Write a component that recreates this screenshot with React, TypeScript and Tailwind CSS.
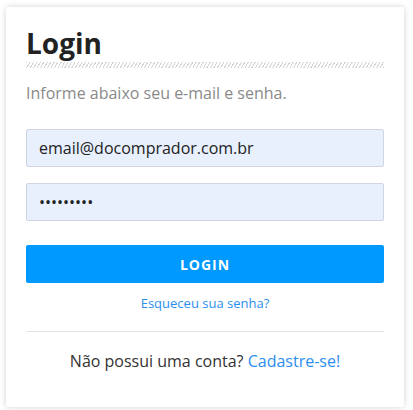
export default function App() {
  return (
    <div className="min-h-[410px] bg-white pt-[7px] px-[6px] font-['Open_Sans',sans-serif]">
      <div className="w-[398px] h-[400px] rounded-[2px] bg-white shadow-[0_0_6px_rgba(0,0,0,0.18)] px-[20px] pt-[18px]">
        <h1 className="text-[28px] leading-[36px] font-bold text-[#222]">Login</h1>
        <div className="mt-[1px] h-[6px] bg-[repeating-linear-gradient(-60deg,#d4d4d4_0px,#d4d4d4_1px,transparent_1px,transparent_3px)]" />
        <p className="mt-[14px] text-[16px] leading-[22px] text-[#8a8a8a]">Informe abaixo seu e-mail e senha.</p>
        <form className="mt-[25px] flex flex-col">
          <input
            className="h-[38px] w-full rounded-[2px] border border-[#cfd6e0] bg-[#e8f0fe] px-[12px] text-[16px] text-[#222] outline-none"
            defaultValue="email@docomprador.com.br"
          />
          <input
            type="password"
            className="mt-[16px] h-[38px] w-full rounded-[2px] border border-[#cfd6e0] bg-[#e8f0fe] px-[12px] text-[16px] text-[#222] outline-none"
            defaultValue="123456789"
          />
          <button
            type="button"
            className="mt-[24px] h-[38px] w-full rounded-[2px] bg-[#0099ff] text-[14px] font-bold tracking-[1px] text-white"
          >
            LOGIN
          </button>
        </form>
        <div className="mt-[11px] text-center text-[13px] leading-[18px] text-[#2b8ef0]">Esqueceu sua senha?</div>
        <div className="mt-[19px] h-px bg-[#e3e3e3]" />
        <p className="mt-[18px] text-center text-[16px] leading-[22px] text-[#333]">
          Não possui uma conta? <span className="text-[#2b8ef0]">Cadastre-se!</span>
        </p>
      </div>
    </div>
  );
}
